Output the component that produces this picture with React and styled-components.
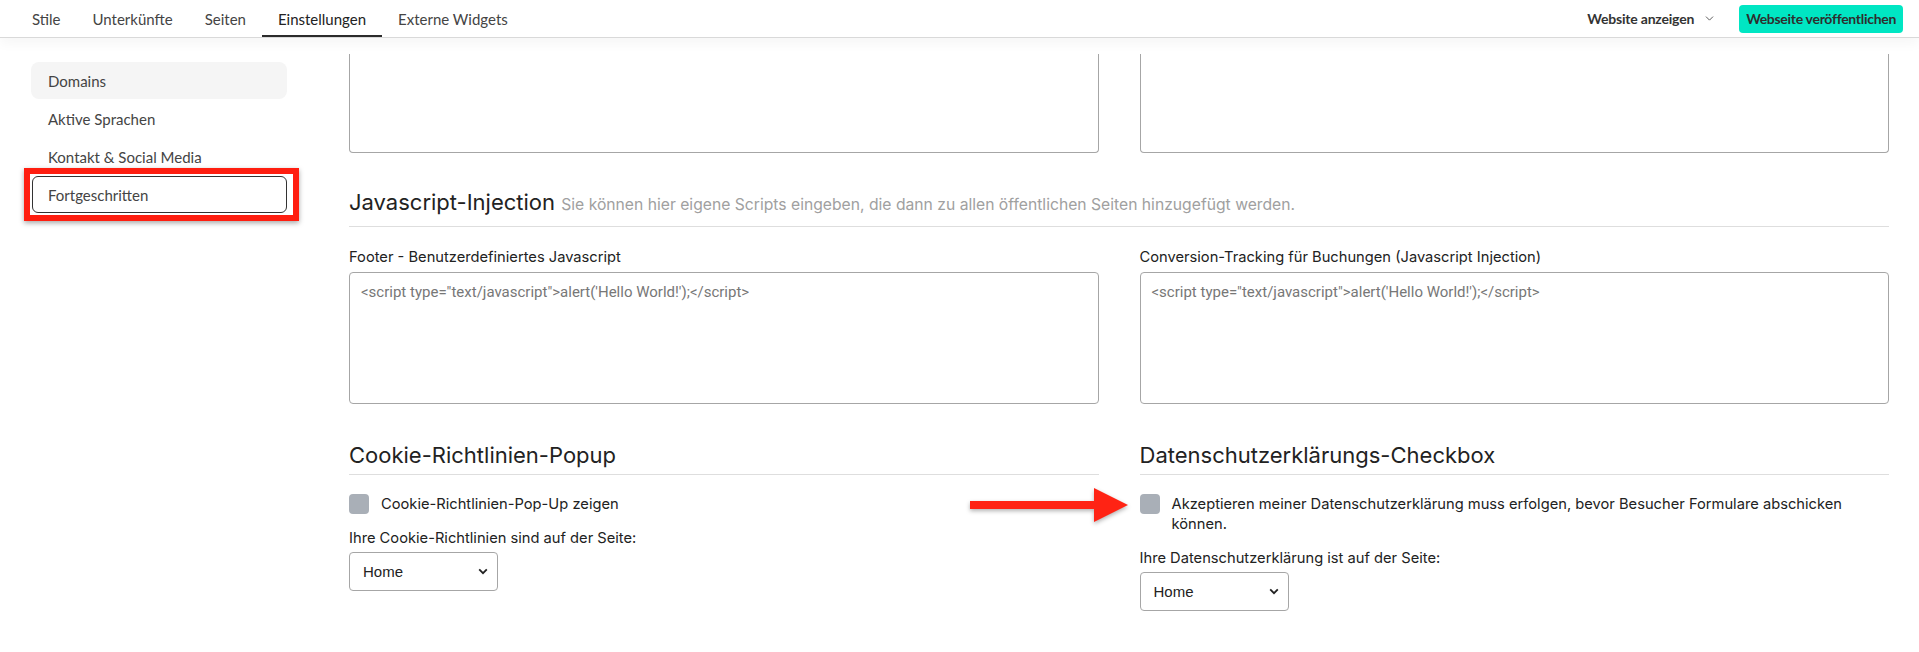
import styled, { createGlobalStyle } from "styled-components";
import { ChevronDown } from "lucide-react";

const GlobalStyle = createGlobalStyle`
  * {
    box-sizing: border-box;
  }
  body {
    margin: 0;
    background: #ffffff;
    font-family: Lato, "Noto Sans", sans-serif;
    color: #333333;
  }
`;

const tabs = ["Stile", "Unterkünfte", "Seiten", "Einstellungen", "Externe Widgets"];
const sideItems = ["Domains", "Aktive Sprachen", "Kontakt & Social Media", "Fortgeschritten"];
const codePlaceholder = `<script type="text/javascript">alert('Hello World!');</script>`;

export default function App() {
  return (
    <>
      <GlobalStyle />
      <Page>
        <TopBar>
          <Tabs>
            {tabs.map((t) => (
              <Tab key={t} $active={t === "Einstellungen"}>
                {t}
              </Tab>
            ))}
          </Tabs>
          <Actions>
            <ViewLink>
              Website anzeigen
              <ChevronDown size={13} strokeWidth={1.6} color="#444" />
            </ViewLink>
            <PublishButton>Webseite veröffentlichen</PublishButton>
          </Actions>
        </TopBar>

        <Body>
          <Sidebar>
            {sideItems.map((item) => (
              <SideItem
                key={item}
                $active={item === "Domains"}
                $outlined={item === "Fortgeschritten"}
              >
                {item}
              </SideItem>
            ))}
          </Sidebar>

          <Main>
            <TwoCol>
              <CutBox />
              <CutBox />
            </TwoCol>

            <SectionTitle>
              Javascript-Injection{" "}
              <Hint>
                Sie können hier eigene Scripts eingeben, die dann zu allen
                öffentlichen Seiten hinzugefügt werden.
              </Hint>
            </SectionTitle>

            <TwoCol>
              <Field>
                <Label>Footer - Benutzerdefiniertes Javascript</Label>
                <CodeArea placeholder={codePlaceholder} />
              </Field>
              <Field>
                <Label>Conversion-Tracking für Buchungen (Javascript Injection)</Label>
                <CodeArea placeholder={codePlaceholder} />
              </Field>
            </TwoCol>

            <TwoCol>
              <Section>
                <SectionTitle $big>Cookie-Richtlinien-Popup</SectionTitle>
                <CheckRow>
                  <Check />
                  <CheckText>Cookie-Richtlinien-Pop-Up zeigen</CheckText>
                </CheckRow>
                <SubLabel>Ihre Cookie-Richtlinien sind auf der Seite:</SubLabel>
                <PageSelect />
              </Section>
              <Section>
                <Arrow width="162" height="36" viewBox="0 0 162 36">
                  <rect x="2" y="14" width="128" height="8" fill="#ff2314" />
                  <polygon points="126,1 160,18 126,35" fill="#ff2314" />
                </Arrow>
                <SectionTitle $big>Datenschutzerklärungs-Checkbox</SectionTitle>
                <CheckRow>
                  <Check />
                  <CheckText>
                    Akzeptieren meiner Datenschutzerklärung muss erfolgen, bevor
                    Besucher Formulare abschicken können.
                  </CheckText>
                </CheckRow>
                <SubLabel>Ihre Datenschutzerklärung ist auf der Seite:</SubLabel>
                <PageSelect />
              </Section>
            </TwoCol>
          </Main>
        </Body>
      </Page>
    </>
  );
}

function PageSelect() {
  return (
    <SelectWrap>
      <Select defaultValue="home">
        <option value="home">Home</option>
      </Select>
      <SelectIcon width="10" height="7" viewBox="0 0 10 7">
        <path d="M1.2 1.4 L5 5.2 L8.8 1.4" fill="none" stroke="#222" strokeWidth="1.8" />
      </SelectIcon>
    </SelectWrap>
  );
}

// -------------------css

const Page = styled.div`
  width: 100%;
  min-height: 652px;
  background: #fff;
`;

const TopBar = styled.header`
  position: relative;
  z-index: 2;
  height: 38px;
  display: flex;
  align-items: flex-start;
  justify-content: space-between;
  padding: 0 16px;
  border-bottom: 1px solid #d9d9d9;
  background: #fff;
  box-shadow: 0 6px 12px rgba(0, 0, 0, 0.035);
`;

const Tabs = styled.nav`
  display: flex;
  height: 37px;
`;

const Tab = styled.div`
  height: 37px;
  padding: 2px 16px 0;
  display: flex;
  align-items: center;
  font-size: 15px;
  color: ${(p) => (p.$active ? "#222" : "#444")};
  border-bottom: 2px solid ${(p) => (p.$active ? "#2b2b2b" : "transparent")};
`;

const Actions = styled.div`
  display: flex;
  align-items: center;
  gap: 23px;
  height: 37px;
`;

const ViewLink = styled.div`
  display: flex;
  align-items: center;
  gap: 9px;
  font-size: 14px;
  letter-spacing: -0.2px;
  font-weight: 700;
  color: #333;
`;

const PublishButton = styled.button`
  height: 28px;
  padding: 0 7px;
  border: none;
  border-radius: 4px;
  background: #00e6c3;
  color: #2e2e2e;
  font-family: Lato, "Noto Sans", sans-serif;
  font-size: 14px;
  letter-spacing: -0.3px;
  font-weight: 700;
`;

const Body = styled.div`
  display: flex;
  padding: 0 30px 0 31px;
`;

const Sidebar = styled.aside`
  width: 256px;
  flex-shrink: 0;
  padding-top: 24px;
  margin-right: 62px;
  display: flex;
  flex-direction: column;
  gap: 1px;
`;

const SideItem = styled.div`
  position: relative;
  height: 37px;
  display: flex;
  align-items: center;
  padding-left: ${(p) => (p.$outlined ? "15px" : "17px")};
  font-size: 15px;
  color: #444;
  border-radius: ${(p) => (p.$outlined ? "6px" : "8px")};
  background: ${(p) => (p.$active ? "#f5f5f5" : "transparent")};
  border: ${(p) => (p.$outlined ? "1px solid #333" : "none")};
  margin-left: ${(p) => (p.$outlined ? "1px" : "0")};

  ${(p) =>
    p.$outlined &&
    `
    &::before {
      content: "";
      position: absolute;
      top: -9px;
      left: -9px;
      right: -13px;
      bottom: -9px;
      border: 6px solid #ff1e10;
      box-shadow: 0 2px 5px rgba(0, 0, 0, 0.35);
      pointer-events: none;
    }
  `}
`;

const Main = styled.main`
  flex: 1;
  padding-top: 16px;
  font-family: Inter, "Open Sans", sans-serif;
  color: #222;
`;

const TwoCol = styled.div`
  display: grid;
  grid-template-columns: 1fr 1fr;
  column-gap: 41px;
`;

const CutBox = styled.div`
  height: 99px;
  border: 1px solid #a6a6a6;
  border-top: none;
  border-radius: 0 0 4px 4px;
`;

const SectionTitle = styled.h2`
  margin: ${(p) => (p.$big ? "38px 0 0" : "36px 0 0")};
  padding-bottom: ${(p) => (p.$big ? "6px" : "8px")};
  border-bottom: 1px solid #dedede;
  font-size: 22px;
  line-height: 26px;
  font-weight: 400;
  color: #222;
`;

const Hint = styled.span`
  font-size: 15.7px;
  color: #a0a0a0;
`;

const Field = styled.div`
  display: flex;
  flex-direction: column;
`;

const Label = styled.label`
  margin-top: 20px;
  margin-bottom: 5px;
  font-size: 14.7px;
  line-height: 20px;
  color: #222;
`;

const CodeArea = styled.textarea`
  height: 132px;
  resize: none;
  padding: 10px 11px;
  border: 1px solid #a6a6a6;
  border-radius: 4px;
  font-family: Roboto, "Liberation Sans", sans-serif;
  font-size: 15px;
  &::placeholder {
    color: #777;
  }
`;

const Section = styled.section`
  position: relative;
  display: flex;
  flex-direction: column;
  align-items: flex-start;
  > h2 {
    align-self: stretch;
  }
`;

const Arrow = styled.svg`
  position: absolute;
  left: -172px;
  top: 83px;
  filter: drop-shadow(0 2px 2px rgba(0, 0, 0, 0.3));
`;

const CheckRow = styled.div`
  display: flex;
  align-items: flex-start;
  gap: 12px;
  margin-top: 19px;
`;

const Check = styled.span`
  flex-shrink: 0;
  width: 20px;
  height: 20px;
  border-radius: 4px;
  background: #a9afb7;
`;

const CheckText = styled.span`
  max-width: 700px;
  font-size: 14.7px;
  line-height: 20px;
  color: #222;
`;

const SubLabel = styled.div`
  margin-top: 14px;
  font-size: 14.7px;
  line-height: 20px;
  color: #222;
`;

const SelectWrap = styled.div`
  position: relative;
  margin-top: 4px;
  width: 149px;
  height: 39px;
`;

const Select = styled.select`
  appearance: none;
  width: 100%;
  height: 100%;
  padding: 0 30px 0 13px;
  border: 1px solid #a6a6a6;
  border-radius: 4px;
  background: #fff;
  font-family: "Liberation Sans", Arial, sans-serif;
  font-size: 15px;
  color: #222;
`;

const SelectIcon = styled.svg`
  position: absolute;
  right: 10px;
  top: 16px;
  pointer-events: none;
`;
